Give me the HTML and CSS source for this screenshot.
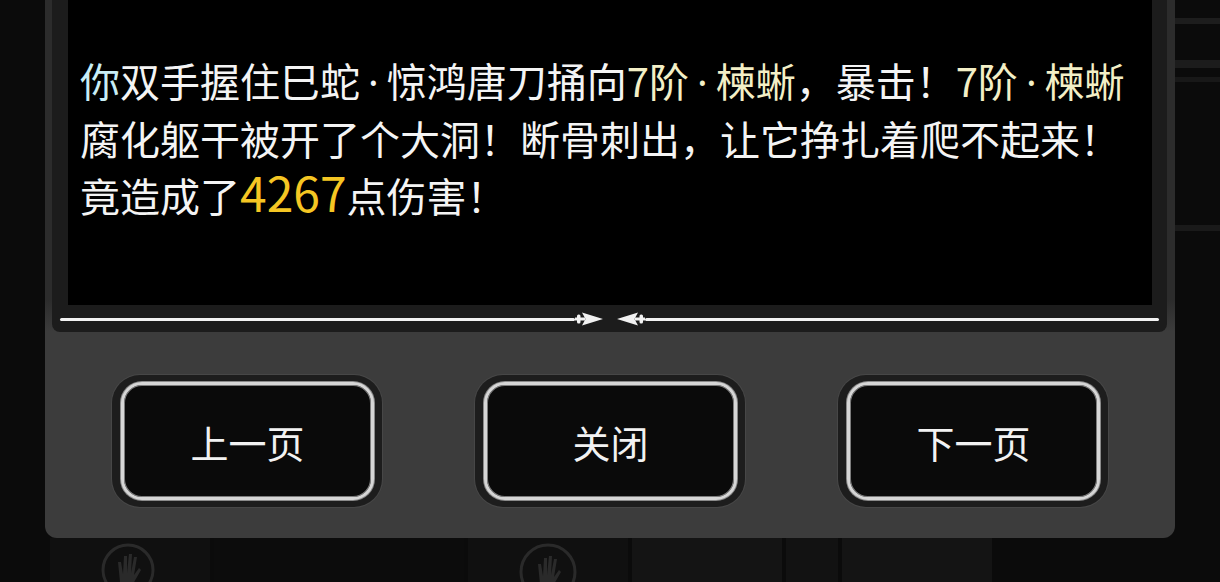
FILE: index.html
```html
<!DOCTYPE html>
<html lang="zh-CN">
<head>
    <meta charset="UTF-8">
    <meta name="viewport" content="width=device-width, initial-scale=1.0">
    <title>战斗记录</title>
    <link rel="stylesheet" href="styles.css">
</head>
<body>
    <!-- Battle log dialog -->
    <div class="dialog">
        <div class="log">
            <div class="log-text">
                <p><span class="hl-you">你</span>双手握住巳蛇<span class="dot">·</span>惊鸿唐刀捅向<span class="hl-enemy">7阶<span class="dot">·</span>楝蜥</span>，暴击！<span class="hl-enemy">7阶<span class="dot">·</span>楝蜥</span>腐化躯干被开了个大洞！断骨刺出，让它挣扎着爬不起来！竟造成了<span class="hl-dmg">4267</span>点伤害！</p>
            </div>
            <div class="divider">
                <span class="rule"></span>
                <svg class="arrows" width="70" height="16" viewBox="0 0 70 16">
                    <rect x="0" y="6.5" width="10" height="3" fill="#f2f2f2"/>
                    <rect x="2" y="3.5" width="3.5" height="9" rx="1.5" fill="#f2f2f2"/>
                    <polygon points="7,1.5 28,8 7,14.5 10.5,8" fill="#f2f2f2"/>
                    <rect x="60" y="6.5" width="10" height="3" fill="#f2f2f2"/>
                    <rect x="64.5" y="3.5" width="3.5" height="9" rx="1.5" fill="#f2f2f2"/>
                    <polygon points="63,1.5 42,8 63,14.5 59.5,8" fill="#f2f2f2"/>
                </svg>
                <span class="rule"></span>
            </div>
        </div>

        <div class="actions">
            <div class="btn-ring"><button class="btn">上一页</button></div>
            <div class="btn-ring"><button class="btn">关闭</button></div>
            <div class="btn-ring"><button class="btn">下一页</button></div>
        </div>
    </div>

    <!-- Cards behind the dialog -->
    <div class="backdrop">
        <div class="card card-hand">
            <svg width="56" height="56" viewBox="0 0 56 56">
                <circle cx="28" cy="28" r="25" fill="none" stroke="#2a2a2a" stroke-width="3"/>
                <path d="M20 40 L18 20 L21 20 L23 32 L24 14 L27 14 L27 31 L29 12 L32 12 L31 31 L34 15 L37 15 L34 33 L39 26 L41 28 L33 42 Z" fill="#2a2a2a"/>
            </svg>
        </div>
        <div class="card card-dark"></div>
        <div class="card card-hand">
            <svg width="72" height="56" viewBox="0 0 72 56">
                <circle cx="36" cy="30" r="27" fill="none" stroke="#2a2a2a" stroke-width="3"/>
                <path d="M28 42 L26 22 L29 22 L31 34 L32 16 L35 16 L35 33 L37 14 L40 14 L39 33 L42 17 L45 17 L42 35 L47 28 L49 30 L41 44 Z" fill="#2a2a2a"/>
            </svg>
        </div>
        <div class="card card-grey"></div>
        <div class="card card-narrow"></div>
        <div class="card card-grey"></div>
    </div>
</body>
</html>
```

FILE: styles.css
```css
body {
    margin: 0;
    padding: 0;
    height: 582px;
    overflow: hidden;
    font-family: "Noto Sans CJK SC", "Noto Sans", sans-serif;
    color: #f4f4f4;
    background:
        linear-gradient(#1d1d1d, #1d1d1d) 1175px 18px / 45px 6px no-repeat,
        linear-gradient(#1c1c1c, #1c1c1c) 1175px 60px / 45px 8px no-repeat,
        linear-gradient(#181818, #181818) 1175px 77px / 45px 5px no-repeat,
        linear-gradient(#1a1a1a, #1a1a1a) 1175px 225px / 45px 6px no-repeat,
        #0b0b0b;
}

.dialog {
    width: 1130px;
    height: 538px;
    margin-left: 45px;
    border-radius: 0 0 12px 12px;
    background: linear-gradient(#2c2c2c 0, #2c2c2c 300px, #3c3c3c 332px);
    display: flex;
    flex-direction: column;
}

.log {
    margin: 0 8px 0 7px;
    padding: 0 15px 0 16px;
    background: #1c1c1c;
    border-radius: 0 0 8px 8px;
}

.log-text {
    height: 305px;
    box-sizing: border-box;
    padding: 52px 12px 0 12px;
    background: #000;
}

.log-text p {
    margin: 0;
    font-size: 40px;
    line-height: 57px;
}

/* latin middle dot is narrow, give it some room */
.dot {
    font-family: "Noto Sans", sans-serif;
    padding: 0 8px;
}

.hl-you {
    color: #c8eef6;
}

.hl-enemy {
    color: #f3efc6;
}

.hl-dmg {
    color: #f5c623;
    font-size: 48px;
    line-height: 40px;
}

.divider {
    display: flex;
    align-items: center;
    height: 16px;
    margin: 6px -7px 0 -8px;
    padding-bottom: 5px;
}

.rule {
    flex: 1;
    height: 3px;
    background: #f2f2f2;
    border-radius: 2px;
}

.arrows {
    display: block;
}

.actions {
    flex: 1;
    display: flex;
    justify-content: center;
    gap: 93px;
    padding-top: 43px;
}

.btn-ring {
    padding: 7px 8px 7px 9px;
    height: 118px;
    background: #1d1d1d;
    border-radius: 28px;
    box-shadow: 0 0 0 1px #474747;
}

.btn {
    width: 253px;
    height: 118px;
    box-sizing: border-box;
    border: 3px solid #d6d6d6;
    border-radius: 21px;
    background: #0a0a0a;
    box-shadow: inset 0 0 0 1px #7c7c7c, 0 0 0 1px #8a8a8a;
    color: #f2f2f2;
    font-family: "Noto Sans CJK SC", "Noto Sans", sans-serif;
    font-size: 38px;
    cursor: pointer;
}

.backdrop {
    display: flex;
    height: 44px;
    padding-left: 50px;
    gap: 4px;
}

.card {
    height: 60px;
    background: #101010;
}

.card-hand {
    width: 160px;
    display: flex;
    justify-content: center;
    padding-top: 4px;
}

.card-hand:first-child {
    justify-content: flex-start;
    padding-left: 50px;
    width: 110px;
}

.card-dark {
    width: 250px;
    background: #0c0c0c;
}

.card-grey {
    width: 150px;
    background: #141414;
}

.card-narrow {
    width: 52px;
    background: #121212;
}
```
